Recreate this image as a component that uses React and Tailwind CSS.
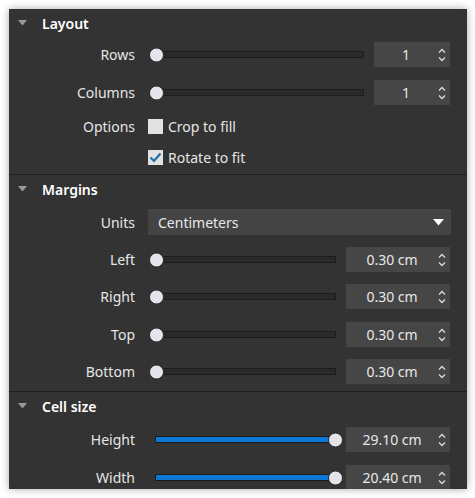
import { useState } from 'react';

const font = { fontFamily: '"Noto Sans", "Open Sans", sans-serif' };

function HeaderCaret() {
  return (
    <svg width="9" height="6" viewBox="0 0 9 6" className="shrink-0">
      <path d="M0 0 L9 0 L4.5 5.5 Z" fill="#9a9a9a" />
    </svg>
  );
}

function Section({ title, children, last }) {
  return (
    <div className={last ? '' : 'border-b border-[#1f1f1f]'}>
      <div className="flex h-[28px] items-center pl-[9px]">
        <HeaderCaret />
        <span className="ml-[15px] text-[14px] font-semibold text-white">{title}</span>
      </div>
      {children}
    </div>
  );
}

function Label({ children }) {
  return <div className="w-[126px] shrink-0 text-right text-[14px] text-[#e6e6e6]">{children}</div>;
}

function Spinner() {
  return (
    <svg width="8" height="14" viewBox="0 0 8 14" className="shrink-0">
      <path d="M1 4.5 L4 1.5 L7 4.5" fill="none" stroke="#dcdcdc" strokeWidth="1.3" />
      <path d="M1 9.5 L4 12.5 L7 9.5" fill="none" stroke="#dcdcdc" strokeWidth="1.3" />
    </svg>
  );
}

function SpinBox({ value, wide }) {
  return (
    <div className={`ml-[3px] flex h-[25px] shrink-0 items-center bg-[#464646] pr-[4px] ${wide ? 'w-[104px]' : 'w-[76px]'}`}>
      <span className="flex-1 text-center text-[14px] text-[#e8e8e8]">{value}</span>
      <Spinner />
    </div>
  );
}

function Slider({ pct }) {
  const filled = pct > 0;
  return (
    <div className="ml-[13px] flex h-[25px] flex-1 items-center px-[7px]">
      <div className={`relative h-[7px] w-full border ${filled ? 'border-[#1a1a1a] bg-[#0a78d4]' : 'border-[#1c1c1c] bg-[#2a2a2a]'}`}>
        <div
          className="absolute top-1/2 h-[15px] w-[15px] -translate-y-1/2 rounded-full border border-[#2a2a2a] bg-[#e4e4ea]"
          style={{ left: `calc(${pct}% - 7.5px)` }}
        />
      </div>
    </div>
  );
}

function SliderRow({ label, value, pct = 0, wide, className = '' }) {
  return (
    <div className={`flex items-center pr-[17px] ${className}`}>
      <Label>{label}</Label>
      <Slider pct={pct} />
      <SpinBox value={value} wide={wide} />
    </div>
  );
}

function Check({ checked, label, onToggle }) {
  return (
    <button type="button" onClick={onToggle} className="flex items-center gap-[5px]">
      <span className="flex h-[15px] w-[15px] items-center justify-center bg-[#e2e2e2]">
        {checked && (
          <svg width="13" height="11" viewBox="0 0 13 11">
            <path d="M1.5 5.5 L5 9 L11.5 1.5" fill="none" stroke="#1f6fa8" strokeWidth="2.2" />
          </svg>
        )}
      </span>
      <span className="text-[14px] text-[#e6e6e6]">{label}</span>
    </button>
  );
}

export default function App() {
  const [crop, setCrop] = useState(false);
  const [rotate, setRotate] = useState(true);

  return (
    <div className="h-[498px] w-[475px] bg-white pl-[9px] pt-[9px]" style={font}>
      <div className="h-[480px] w-[458px] overflow-hidden bg-[#333333] shadow-[0_0_8px_rgba(0,0,0,0.35)]">
        <Section title="Layout">
          <SliderRow label="Rows" value="1" className="mt-[5px]" />
          <SliderRow label="Columns" value="1" className="mt-[13px]" />
          <div className="mt-[9px] flex h-[25px] items-center">
            <Label>Options</Label>
            <div className="ml-[13px]">
              <Check checked={crop} label="Crop to fill" onToggle={() => setCrop(!crop)} />
            </div>
          </div>
          <div className="mt-[6px] flex h-[25px] items-center">
            <div className="ml-[139px]">
              <Check checked={rotate} label="Rotate to fit" onToggle={() => setRotate(!rotate)} />
            </div>
          </div>
          <div className="h-[4px]" />
        </Section>

        <Section title="Margins">
          <div className="mt-[6px] flex items-center pr-[16px]">
            <Label>Units</Label>
            <div className="ml-[13px] flex h-[26px] flex-1 items-center justify-between bg-[#444444] pl-[10px] pr-[7px]">
              <span className="text-[14px] text-[#e8e8e8]">Centimeters</span>
              <svg width="11" height="7" viewBox="0 0 11 7">
                <path d="M0 0 L11 0 L5.5 6.5 Z" fill="#ffffff" />
              </svg>
            </div>
          </div>
          <SliderRow label="Left" value="0.30 cm" wide className="mt-[12px]" />
          <SliderRow label="Right" value="0.30 cm" wide className="mt-[12px]" />
          <SliderRow label="Top" value="0.30 cm" wide className="mt-[13px]" />
          <SliderRow label="Bottom" value="0.30 cm" wide className="mt-[12px]" />
          <div className="h-[7px]" />
        </Section>

        <Section title="Cell size" last>
          <SliderRow label="Height" value="29.10 cm" pct={100} wide className="mt-[7px]" />
          <SliderRow label="Width" value="20.40 cm" pct={100} wide className="mt-[13px]" />
        </Section>
      </div>
    </div>
  );
}
